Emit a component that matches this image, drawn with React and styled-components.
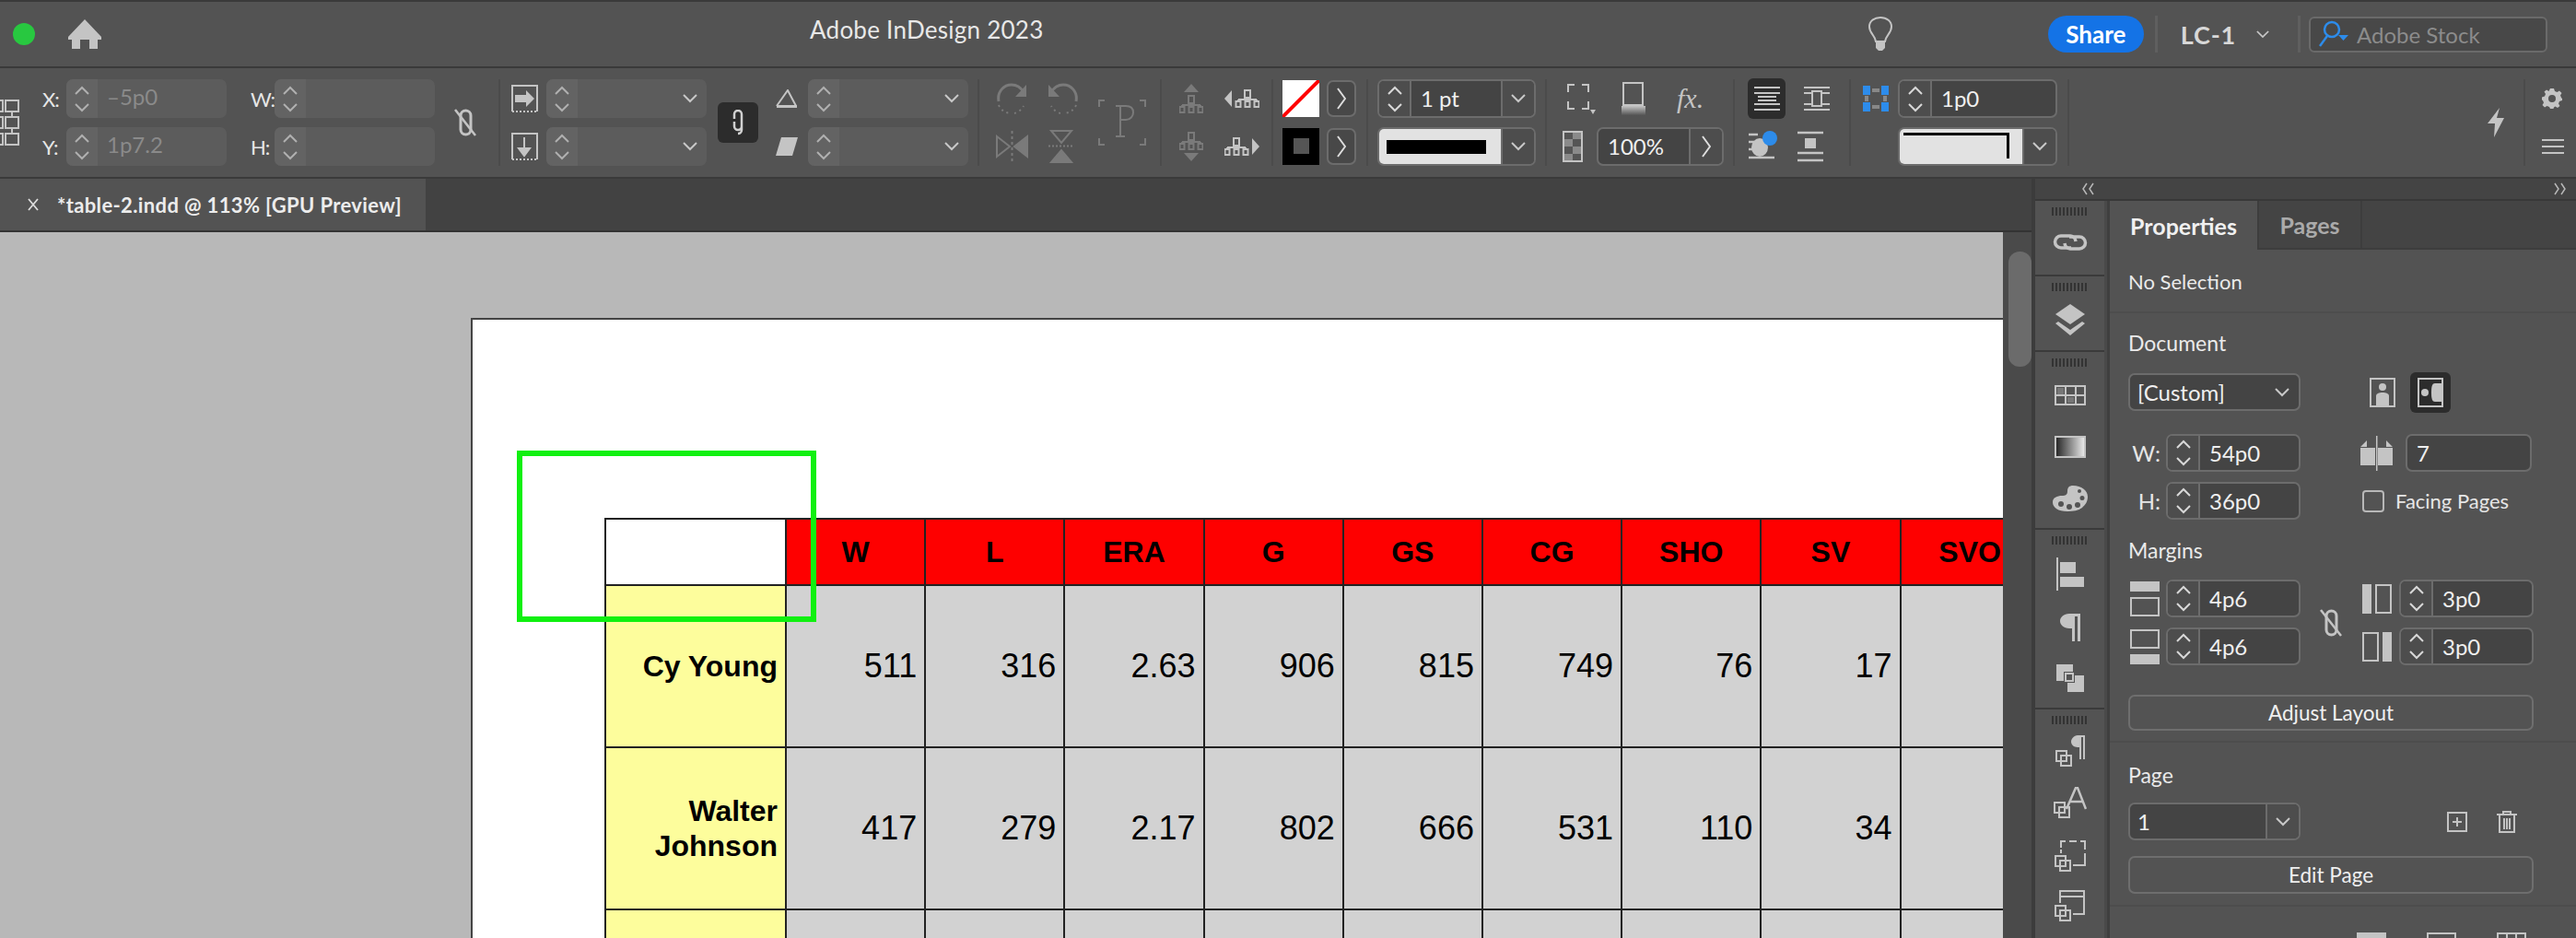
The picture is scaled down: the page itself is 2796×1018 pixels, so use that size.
import styled, { createGlobalStyle } from "styled-components";

const ICON = "#c4c4c4";
const DIM = "#7a7a7a";

const GlobalStyle = createGlobalStyle`
  html, body { margin: 0; padding: 0; background: #535353; }
  body { width: 2796px; height: 1018px; overflow: hidden; font-family: "Lato", "Noto Sans", sans-serif; }
  * { box-sizing: border-box; }
  svg { display: block; flex: none; }
`;

const Wrapper = styled.div`
  width: 2796px;
  height: 1018px;
  display: flex;
  flex-direction: column;
  border-top: 2px solid #3a3a3a;
  overflow: hidden;
`;

/* ---------- title bar ---------- */
const TitleBar = styled.header`
  height: 72px;
  flex: none;
  position: relative;
  display: flex;
  align-items: center;
  background: #535353;
  border-bottom: 2px solid #3a3a3a;
`;
const GreenDot = styled.span`
  width: 24px;
  height: 24px;
  margin-left: 14px;
  border-radius: 50%;
  background: #28c840;
`;
const HomeBtn = styled.span`
  margin-left: 36px;
`;
const AppTitle = styled.div`
  position: absolute;
  left: 879px;
  top: 14px;
  font-size: 26px;
  line-height: 32px;
  color: #e8e8e8;
  letter-spacing: 0.25px;
`;
const TitleRight = styled.div`
  margin-left: auto;
  display: flex;
  align-items: center;
  height: 100%;
  padding-right: 31px;
`;
const ShareBtn = styled.span`
  width: 104px;
  height: 40px;
  margin-left: 168px;
  border-radius: 20px;
  background: #1473e6;
  color: #fff;
  font-size: 26px;
  font-weight: 700;
  text-align: center;
  line-height: 40px;
`;
const TitleDivider = styled.span`
  width: 3px;
  height: 40px;
  margin: 0 ${(p) => p.$r}px 0 ${(p) => p.$l}px;
  background: #5f5f5f;
`;
const UserName = styled.span`
  font-size: 27px;
  font-weight: 700;
  letter-spacing: 0.8px;
  color: #d8d8d8;
  margin-right: 22px;
`;
const SearchBox = styled.div`
  width: 259px;
  height: 39px;
  display: flex;
  align-items: center;
  gap: 8px;
  padding-left: 8px;
  background: #484848;
  border: 2px solid #6a6a6a;
  border-radius: 6px;
  color: #8c8c8c;
  font-size: 24px;
`;

/* ---------- control bar ---------- */
const ControlBar = styled.div`
  height: 120px;
  flex: none;
  display: flex;
  align-items: center;
  background: #535353;
  border-bottom: 2px solid #3a3a3a;
`;
const Stack = styled.div`
  display: flex;
  flex-direction: column;
  justify-content: ${(p) => p.$justify || "flex-start"};
  gap: 10px;
  height: 94px;
  margin-left: ${(p) => p.$ml || 0}px;
`;
const Cell2 = styled.div`
  height: 42px;
  display: flex;
  align-items: center;
  justify-content: ${(p) => p.$justify || "flex-start"};
  gap: ${(p) => p.$gap || 0}px;
  padding-left: ${(p) => p.$pl || 0}px;
`;
const Slot = styled.div`
  margin-left: ${(p) => p.$ml || 0}px;
  display: flex;
  align-items: center;
`;
const VDivider = styled.span`
  width: 2px;
  height: 94px;
  margin-left: ${(p) => p.$ml || 0}px;
  background: #4b4b4b;
`;
const Label = styled.span`
  width: 26px;
  font-size: 22px;
  letter-spacing: -1px;
  white-space: nowrap;
  color: #e6e6e6;
`;
const DarkBtn = styled.span`
  width: ${(p) => p.$w}px;
  height: ${(p) => p.$h}px;
  display: flex;
  align-items: center;
  justify-content: center;
  background: #2c2c2c;
  border-radius: 6px;
`;
const Field = styled.div`
  width: ${(p) => p.$w}px;
  height: ${(p) => p.$h || 42}px;
  flex: none;
  display: flex;
  align-items: stretch;
  border-radius: 7px;
  overflow: hidden;
  background: ${(p) => (p.$off ? "#5c5c5c" : "#444444")};
  border: ${(p) => (p.$off ? "none" : "2px solid #6c6c6c")};
`;
const StepBox = styled.div`
  width: ${(p) => (p.$off ? 34 : 35)}px;
  flex: none;
  display: flex;
  flex-direction: column;
  align-items: center;
  justify-content: center;
  gap: 9px;
  background: ${(p) => (p.$off ? "#636363" : "#4d4d4d")};
  border-right: ${(p) => (p.$off ? "none" : "2px solid #6c6c6c")};
`;
const FieldText = styled.span`
  flex: 1;
  padding-left: 10px;
  font-size: 24px;
  line-height: 38px;
  color: ${(p) => (p.$off ? "#8a8a8a" : "#efefef")};
`;
const DropEnd = styled.span`
  width: ${(p) => p.$w || 36}px;
  flex: none;
  display: flex;
  align-items: center;
  justify-content: center;
  border-left: ${(p) => (p.$plain ? "none" : "2px solid #6c6c6c")};
  background: ${(p) => (p.$plain ? "transparent" : "#4d4d4d")};
`;
const StrokeSample = styled.span`
  flex: 1;
  display: flex;
  align-items: center;
  padding-left: 8px;
  background: #e2e2e2;
`;
const StrokeBar = styled.span`
  width: 108px;
  height: 15px;
  background: #000;
`;
const ArrowBtn = styled.span`
  width: 32px;
  height: 40px;
  display: flex;
  align-items: center;
  justify-content: center;
  margin-left: 8px;
  border: 2px solid #6c6c6c;
  border-radius: 7px;
  background: #484848;
`;

/* ---------- workspace ---------- */
const Workspace = styled.div`
  flex: 1;
  min-height: 0;
  display: flex;
`;
const DocColumn = styled.div`
  width: 2205px;
  flex: none;
  display: flex;
  flex-direction: column;
`;
const TabStrip = styled.div`
  height: 58px;
  flex: none;
  background: #424242;
  border-bottom: 2px solid #333;
`;
const DocTab = styled.div`
  width: 462px;
  height: 56px;
  display: flex;
  align-items: center;
  padding-left: 30px;
  gap: 20px;
  background: #535353;
  color: #ececec;
  font-size: 22px;
  font-weight: 700;
  letter-spacing: 0.36px;
  white-space: nowrap;
`;
const CanvasRow = styled.div`
  flex: 1;
  min-height: 0;
  display: flex;
`;
const Canvas = styled.div`
  width: 2174px;
  flex: none;
  padding: 93px 0 0 511px;
  background: #b8b8b8;
  overflow: hidden;
`;
const Page = styled.div`
  position: relative;
  height: 900px;
  padding: 215px 0 0 143px;
  background: #fff;
  border-top: 2px solid #444;
  border-left: 2px solid #444;
  overflow: hidden;
`;
const GreenFrame = styled.div`
  position: absolute;
  left: 48px;
  top: 142px;
  width: 325px;
  height: 186px;
  border: 6px solid #10f010;
`;
const Table = styled.table`
  width: 1557px;
  table-layout: fixed;
  border-collapse: collapse;
  font-family: "Liberation Sans", Arial, sans-serif;
  color: #000;
`;
const HeadCell = styled.th`
  height: 72px;
  padding: 0;
  border: 2px solid #222;
  background: ${(p) => (p.$blank ? "#fff" : "#fe0000")};
  font-size: 32px;
  font-weight: 700;
  text-align: center;
`;
const NameCell = styled.td`
  height: 176px;
  padding: 0 8px 0 0;
  border: 2px solid #222;
  background: #fdfd9c;
  font-size: 32px;
  line-height: 38px;
  font-weight: 700;
  text-align: right;
`;
const NumCell = styled.td`
  padding: 0 8px 0 0;
  border: 2px solid #222;
  background: #d2d2d2;
  font-size: 36px;
  text-align: right;
`;
const Rail = styled.div`
  flex: 1;
  background: #4a4a4a;
  padding-top: 21px;
  padding-left: 6px;
`;
const Thumb = styled.div`
  height: 125px;
  border-radius: 12px;
  background: #6b6b6b;
`;

/* ---------- right side ---------- */
const SideColumn = styled.div`
  flex: 1;
  display: flex;
  flex-direction: column;
  border-left: 4px solid #3c3c3c;
  background: #444;
`;
const CollapseStrip = styled.div`
  height: 24px;
  flex: none;
  display: flex;
  align-items: center;
  justify-content: space-between;
  padding: 0 10px 0 50px;
  background: #444;
  border-bottom: 2px solid #383838;
`;
const SideBody = styled.div`
  flex: 1;
  min-height: 0;
  display: flex;
`;
const Dock = styled.div`
  width: 81px;
  flex: none;
  background: #4a4a4a;
  border-right: 3px solid #3f3f3f;
  padding-right: 3px;
`;
const DockGroup = styled.div`
  height: ${(p) => p.$h}px;
  display: flex;
  flex-direction: column;
  align-items: center;
  padding-top: 7px;
  background: #535353;
  border-bottom: 2px solid #3a3a3a;
`;
const Grip = styled.span`
  width: 39px;
  height: 9px;
  flex: none;
  background: repeating-linear-gradient(90deg, #333 0 2px, transparent 2px 4px);
`;
const DockIcon = styled.span`
  margin-top: ${(p) => p.$mt}px;
`;
const Panel = styled.div`
  flex: 1;
  background: #535353;
  color: #ececec;
`;
const PanelTabs = styled.div`
  height: 53px;
  display: flex;
  background: #444;
  border-bottom: 2px solid #3d3d3d;
`;
const PanelTab = styled.div`
  width: ${(p) => p.$w}px;
  height: ${(p) => (p.$active ? 53 : 51)}px;
  display: flex;
  align-items: center;
  justify-content: center;
  font-size: 25px;
  font-weight: 700;
  color: ${(p) => (p.$active ? "#f0f0f0" : "#aaa")};
  background: ${(p) => (p.$active ? "#535353" : "#444")};
  border-right: 2px solid #3d3d3d;
`;
const Section = styled.section`
  height: ${(p) => p.$h}px;
  padding: ${(p) => p.$pt}px 46px 0 20px;
  border-bottom: 2px solid #4d4d4d;
`;
const SectionText = styled.div`
  font-size: ${(p) => p.$fs || 23}px;
  line-height: 26px;
  color: #eaeaea;
  margin-top: ${(p) => p.$mt || 0}px;
`;
const PanelRow = styled.div`
  height: ${(p) => p.$h || 41}px;
  margin-top: ${(p) => p.$mt || 0}px;
  display: flex;
  align-items: center;
`;
const LeftSlot = styled.div`
  width: 187px;
  flex: none;
  display: flex;
  align-items: center;
  justify-content: flex-end;
`;
const SideLabel = styled.span`
  font-size: 24px;
  color: #e6e6e6;
  margin-right: 6px;
`;
const SelectText = styled.span`
  flex: 1;
  padding-left: 8px;
  font-size: 24px;
  line-height: 37px;
  color: #efefef;
`;
const CheckBox = styled.span`
  width: 24px;
  height: 24px;
  margin-left: 67px;
  border: 2px solid #b8b8b8;
  border-radius: 4px;
`;
const CheckLabel = styled.span`
  margin-left: 12px;
  font-size: 22px;
  color: #e6e6e6;
`;
const WideButton = styled.div`
  width: 440px;
  height: ${(p) => p.$h}px;
  margin-top: ${(p) => p.$mt}px;
  display: flex;
  align-items: center;
  justify-content: center;
  border: 2px solid #6e6e6e;
  border-radius: 7px;
  font-size: 22.5px;
  color: #efefef;
`;
const MarginGrid = styled.div`
  display: grid;
  grid-template-columns: 187px 67px 186px;
  grid-template-rows: 41px 41px;
  row-gap: 11px;
  margin-top: 19px;
`;
const MarginCell = styled.div`
  grid-column: ${(p) => p.$col};
  display: flex;
  align-items: center;
  justify-content: space-between;
`;
const UnlinkCell = styled.div`
  grid-row: 1 / 3;
  grid-column: 2;
  display: flex;
  align-items: center;
  justify-content: center;
  padding-right: 2px;
`;
const BottomIcons = styled.div`
  display: flex;
  gap: 44px;
  padding: 28px 0 0 268px;
`;
const FxLabel = styled.span`
  margin-left: 6px;
  font-family: "Liberation Serif", serif;
  font-style: italic;
  font-size: 30px;
  color: ${ICON};
`;
const CornerSample = styled.span`
  flex: 1;
  padding: 4px 14px 6px 4px;
  background: #e2e2e2;
`;
const CornerLine = styled.span`
  display: block;
  height: 100%;
  border-top: 3px solid #000;
  border-right: 3px solid #000;
`;

/* ---------- drawings ---------- */
const Chev = ({ up, color = "#c8c8c8", w = 16, h = 10 }) => (
  <svg width={w} height={h} viewBox="0 0 16 10" fill="none" stroke={color} strokeWidth="2">
    <path d={up ? "M1 9 8 2l7 7" : "M1 1l7 7 7-7"} />
  </svg>
);
const Chev2 = ({ right }) => (
  <svg width="14" height="14" viewBox="0 0 14 14" fill="none" stroke="#b8b8b8" strokeWidth="1.500">
    <path d={right ? "M1 1l4 6-4 6M8 1l4 6-4 6" : "M6 1 2 7l4 6M13 1 9 7l4 6"} />
  </svg>
);
const Right = ({ color = "#ddd" }) => (
  <svg width="10" height="24" viewBox="0 0 10 24" fill="none" stroke={color} strokeWidth="2">
    <path d="M1 1l8 11-8 11" />
  </svg>
);
const CloseIcon = () => (
  <svg width="12" height="14" viewBox="0 0 12 14" fill="none" stroke="#ddd" strokeWidth="1.800">
    <path d="M1 1l10 12M11 1 1 13" />
  </svg>
);
const Stepper = ({ off }) => (
  <StepBox $off={off}>
    <Chev up color={off ? "#b0b0b0" : "#d8d8d8"} />
    <Chev color={off ? "#b0b0b0" : "#d8d8d8"} />
  </StepBox>
);
const HomeIcon = () => (
  <svg width="36" height="32" viewBox="0 0 36 32" fill={ICON}>
    <path d="M18 0l18 19v3l-4 0v10h-9V22H13v10H4V22l-4 0v-3z" />
  </svg>
);
const BulbIcon = () => (
  <svg width="28" height="38" viewBox="0 0 28 38" fill="none" stroke={ICON} strokeWidth="2">
    <path d="M9 27C8 20 2 18 2 11 2 5 7 1 14 1s12 4 12 10c0 7-6 9-7 16z" />
    <path d="M9 28h10v6l-3 3h-4l-3-3z" fill={ICON} stroke="none" />
  </svg>
);
const SearchIcon = () => (
  <svg width="34" height="30" viewBox="0 0 34 30" fill="none" stroke="#2d8ceb" strokeWidth="2.500">
    <circle cx="15" cy="10" r="8" />
    <path d="M10 17 2 28" />
    <path d="M22 16h11l-5.500 6z" fill="#2d8ceb" stroke="none" />
  </svg>
);
const RefPoint = () => (
  <svg width="21" height="50" viewBox="0 0 21 50" fill="none" stroke={ICON} strokeWidth="2">
    {[1, 19, 37].map((y) => (
      <g key={y}>
        <rect x="6" y={y} width="14" height="12" />
        <rect x="-10" y={y} width="13" height="12" />
        {y < 37 && <path d={`M13 ${y + 12}v6`} />}
      </g>
    ))}
  </svg>
);
const ChainOff = () => (
  <svg width="26" height="30" viewBox="0 0 26 30" fill="none" stroke={ICON} strokeWidth="3">
    <rect x="8" y="2" width="11" height="26" rx="5.500" />
    <path d="M2 1l22 28" strokeWidth="2.500" />
  </svg>
);
const ChainOn = () => (
  <svg width="16" height="28" viewBox="0 0 14 28" fill="none" stroke="#d0d0d0" strokeWidth="2.500">
    <path d="M3 10V5a4 4 0 018 0v13a4 4 0 01-8 0v-5M11 16v6a4 4 0 01-4 4" />
  </svg>
);
const OffsetIcon = ({ down }) => (
  <svg width="29" height="30" viewBox="0 0 29 30" fill="none" stroke={ICON} strokeWidth="2">
    <path d="M1 29V1h27v28" />
    <path d="M1 29h27" strokeDasharray="2 2" />
    {down ? <path d="M14 5v14M8 17h12l-6 8z" fill={ICON} /> : <path d="M4 11h12V6l9 9-9 9v-5H4z" fill={ICON} stroke="none" />}
  </svg>
);
const AngleIcon = () => (
  <svg width="24" height="20" viewBox="0 0 24 20" fill="none" stroke={ICON} strokeWidth="2">
    <path d="M1 18.500h22" strokeWidth="3" />
    <path d="M1 18 13 1l9 17" />
  </svg>
);
const ShearIcon = () => (
  <svg width="24" height="20" viewBox="0 0 24 20" fill={ICON}>
    <path d="M6 0h18l-6 20H0z" />
  </svg>
);
const RotateIcon = ({ flip }) => (
  <svg width="34" height="34" viewBox="0 0 34 34" fill="none" stroke={DIM} strokeWidth="3" style={flip ? { transform: "scaleX(-1)" } : undefined}>
    <path d="M3 20C1 9 9 2 17 2c6 0 10 3 13 8" />
    <path d="M3 24c2 5 6 8 12 9M20 33c4-1 8-4 10-8" strokeDasharray="2 4" strokeWidth="2" />
    <path d="M33 2v13H21z" fill={DIM} stroke="none" />
  </svg>
);
const FlipH = () => (
  <svg width="35" height="34" viewBox="0 0 35 34" fill="none" stroke={DIM} strokeWidth="2">
    <path d="M1 6l14 11L1 28z" />
    <path d="M34 6 20 17l14 11z" fill={DIM} />
    <path d="M17.500 0v34" strokeDasharray="3 3" />
  </svg>
);
const FlipV = () => (
  <svg width="28" height="36" viewBox="0 0 28 36" fill="none" stroke={DIM} strokeWidth="2">
    <path d="M3 1h22L14 14z" />
    <path d="M3 35h22L14 22z" fill={DIM} />
    <path d="M0 17.500h28" strokeDasharray="2 2" />
  </svg>
);
const PFrame = () => (
  <svg width="52" height="50" viewBox="0 0 52 50" fill="none" stroke={DIM} strokeWidth="2">
    <path d="M1 8V1h6M45 1h6v7M1 42v7h6M45 49h6v-7" />
    <path d="M19 7h11c6 0 8 3 8 7s-3 8-8 8h-6M24 7v33M19 40h10" />
  </svg>
);
const OrgBody = ({ x, y, c }) => (
  <g transform={`translate(${x} ${y})`} fill="none" stroke={c} strokeWidth="2">
    <rect x="10" y="1" width="6" height="8" />
    <path d="M13 9v2M3 11h20M3 11v2M13 11v2M23 11v2" />
    <rect x="0.500" y="13" width="5" height="6" />
    <rect x="10.500" y="13" width="5" height="6" />
    <rect x="20.500" y="13" width="5" height="6" />
  </g>
);
const OrgV = ({ down }) => (
  <svg width="26" height="32" viewBox="0 0 26 32" fill={DIM}>
    <OrgBody x={0} y={down ? 0 : 12} c={DIM} />
    {down ? <path d="M5 23h16l-8 9z" /> : <path d="M5 9h16L13 0z" />}
  </svg>
);
const OrgH = ({ right }) => (
  <svg width="38" height="20" viewBox="0 0 38 20" fill={ICON}>
    <OrgBody x={right ? 0 : 12} y={0} c={ICON} />
    {right ? <path d="M30 1v18l8-9z" /> : <path d="M8 1v18l-8-9z" />}
  </svg>
);
const NoneSwatch = () => (
  <svg width="40" height="40" viewBox="0 0 40 40">
    <rect width="40" height="40" fill="#fff" />
    <path d="M0 40 40 0" stroke="#f00" strokeWidth="4" />
  </svg>
);
const StrokeSwatch = () => (
  <svg width="40" height="40" viewBox="0 0 40 40">
    <rect width="40" height="40" fill="#000" />
    <rect x="12" y="11" width="17" height="17" fill="#555" />
  </svg>
);
const FrameFx = () => (
  <svg width="32" height="34" viewBox="0 0 32 34" fill="none" stroke={ICON} strokeWidth="2">
    <rect x="2" y="2" width="22" height="26" />
    <path d="M9 2h8M9 28h8M2 10v10M24 10v10" stroke="#535353" strokeWidth="3" />
    <path d="M26 29h6l-3 5z" fill={ICON} stroke="none" />
  </svg>
);
const ShadowIcon = () => (
  <svg width="26" height="36" viewBox="0 0 26 36">
    <defs>
      <linearGradient id="sh" x1="0" y1="0" x2="0" y2="1">
        <stop offset="0" stopColor="#c4c4c4" />
        <stop offset="1" stopColor="#555" />
      </linearGradient>
    </defs>
    <rect x="2" y="1" width="21" height="24" fill="none" stroke={ICON} strokeWidth="2" />
    <rect x="0" y="26" width="26" height="10" fill="url(#sh)" />
  </svg>
);
const Checker = () => (
  <svg width="22" height="34" viewBox="0 0 22 34">
    <rect x="1" y="1" width="20" height="32" fill="#8a8a8a" stroke={ICON} strokeWidth="2" />
    <path d="M2 2h9v7H2zM11 9h9v8h-9zM2 17h9v8H2zM11 25h9v7h-9z" fill="#555" />
  </svg>
);
const WrapIcon = ({ kind }) => (
  <svg width="30" height="28" viewBox="0 0 30 28" fill="none" stroke={ICON} strokeWidth="2">
    <path d="M1 2h28M1 26h28M1 8h28M1 20h28" />
    {kind === "a" ? <path d="M5 11h20v2H5zM5 15h20v2H5z" fill={ICON} stroke="none" /> : <rect x="10" y="6" width="10" height="16" fill="#535353" />}
  </svg>
);
const WrapObj = () => (
  <svg width="34" height="34" viewBox="0 0 34 34" fill="none">
    <path d="M1 4h10M1 12h6M1 20h6M1 29h28M20 12h9" stroke={ICON} strokeWidth="2.500" />
    <ellipse cx="13" cy="18" rx="9" ry="10" fill={ICON} />
    <circle cx="24" cy="8" r="8" fill="#2d8ceb" />
  </svg>
);
const WrapJump = () => (
  <svg width="30" height="34" viewBox="0 0 30 34" fill="none" stroke={ICON} strokeWidth="2.500">
    <path d="M1 2h28M1 24h28M1 32h28" />
    <rect x="9" y="8" width="12" height="11" fill={ICON} stroke="none" />
  </svg>
);
const GapIcon = () => (
  <svg width="28" height="28" viewBox="0 0 28 28" fill="#2d8ceb">
    <path d="M0 0h8v10H0zM20 0h8v10h-8zM0 18h8v10H0zM20 18h8v10h-8z" />
    <path d="M10 3h8v4h-8zM10 21h8v4h-8zM2 11h4v6H2zM22 11h4v6h-4z" fill="#888" />
  </svg>
);
const BoltIcon = () => (
  <svg width="20" height="32" viewBox="0 0 20 32" fill={ICON}>
    <path d="M14 0 1 17l8 0-1 15 11-21-8 0z" />
  </svg>
);
const GearIcon = () => (
  <svg width="22" height="22" viewBox="0 0 22 22" fill={ICON}>
    <path fillRule="evenodd" d="M9 0h4l1 3 2.500 1L19 2.500 21.500 5l-1.500 2.500 1 2.500 1 1v2l-3 1-1 2.500 1.500 2.500L17 21l-2.500-1.500-1.500 1-.5 1.500H9l-1-2-2.500-1L3 20.500.5 18 2 15.500 1 13l-1-.5v-3L3 8.500 4 6 2.500 3.500 5 1.500 7.500 3zM11 7a4 4 0 100 8 4 4 0 000-8z" />
  </svg>
);
const MenuIcon = () => (
  <svg width="24" height="16" viewBox="0 0 24 16" stroke={ICON} strokeWidth="2">
    <path d="M0 1h24M0 8h24M0 15h24" />
  </svg>
);
const LinkIcon = () => (
  <svg width="38" height="18" viewBox="0 0 38 18" fill="none" stroke={ICON} strokeWidth="3.500">
    <path d="M20 15h-11a6.500 6.500 0 010-13h10a6.500 6.500 0 016 6" />
    <path d="M18 3h11a6.500 6.500 0 010 13H19a6.500 6.500 0 01-6-6" />
  </svg>
);
const LayersIcon = () => (
  <svg width="32" height="34" viewBox="0 0 32 34" fill={ICON}>
    <path d="M16 0l16 11-16 11L0 11z" />
    <path d="M3 19l13 9 13-9 3 2-16 13L0 21z" />
  </svg>
);
const TableIcon = () => (
  <svg width="34" height="22" viewBox="0 0 34 22" fill="#777" stroke={ICON} strokeWidth="2">
    <rect x="1" y="1" width="32" height="20" fill="none" />
    <path d="M1 11h32M12 1v20M23 1v20" fill="none" />
    <rect x="3" y="3" width="7" height="7" stroke="none" />
    <rect x="14" y="13" width="7" height="6" stroke="none" />
  </svg>
);
const GradientIcon = () => (
  <svg width="34" height="24" viewBox="0 0 34 24">
    <defs>
      <linearGradient id="gr">
        <stop offset="0" stopColor="#222" />
        <stop offset="1" stopColor="#eee" />
      </linearGradient>
    </defs>
    <rect x="1" y="1" width="32" height="22" fill="url(#gr)" stroke={ICON} strokeWidth="2" />
  </svg>
);
const PaletteIcon = () => (
  <svg width="38" height="28" viewBox="0 0 38 28" fill={ICON}>
    <path fillRule="evenodd" d="M22 0c9 0 16 5 16 12 0 6-3 9-6 12-4 3-10 4-16 4C6 28 0 24 0 18c0-5 5-7 10-7 4 0 6-1 6-5 0-4 2-6 6-6zM29 4a2 2 0 100 4 2 2 0 000-4zM32 11a2.500 2.500 0 100 5 2.500 2.500 0 000-5zM27 18a3 3 0 100 6 3 3 0 000-6zM18 20a3 3 0 100 6 3 3 0 000-6zM9 17a3 3 0 100 6 3 3 0 000-6z" />
  </svg>
);
const AlignIcon = () => (
  <svg width="30" height="36" viewBox="0 0 30 36" fill={ICON}>
    <rect x="0" y="0" width="2" height="36" />
    <rect x="4" y="5" width="17" height="12" />
    <rect x="4" y="21" width="26" height="11" />
  </svg>
);
const Pilcrow = () => (
  <svg width="22" height="30" viewBox="0 0 22 30" fill={ICON}>
    <path d="M10 0h12v30h-3V3h-3v27h-3V16h-3C4 16 0 12 0 8s4-8 10-8z" />
  </svg>
);
const PathfinderIcon = () => (
  <svg width="30" height="30" viewBox="0 0 30 30" fill={ICON}>
    <path d="M0 0h18v8H8v10H0z" />
    <path d="M12 12h18v18H12zM12 12v8h8v-8z" />
    <rect x="10" y="10" width="8" height="8" fill="none" stroke={ICON} strokeWidth="2" />
  </svg>
);
const MiniBoxes = ({ x = 0, y = 0 }) => (
  <g transform={`translate(${x} ${y})`} fill="none" stroke={ICON} strokeWidth="2">
    <rect x="1" y="1" width="11" height="11" />
    <rect x="6" y="6" width="11" height="11" />
  </g>
);
const ParaStyle = () => (
  <svg width="32" height="34" viewBox="0 0 32 34">
    <MiniBoxes y="16" />
    <path d="M20 0h12v26h-2V2h-2v24h-2V13h-2c-4 0-7-3-7-6s3-7 7-7z" fill={ICON} />
  </svg>
);
const CharStyle = () => (
  <svg width="36" height="34" viewBox="0 0 36 34">
    <MiniBoxes y="16" />
    <path d="M14 24 24 1h2l9 23M18 16h14" fill="none" stroke={ICON} strokeWidth="2.500" />
  </svg>
);
const ObjStyle = () => (
  <svg width="34" height="34" viewBox="0 0 34 34">
    <MiniBoxes y="16" />
    <path d="M7 14V1h26v26H20" fill="none" stroke={ICON} strokeWidth="2" />
    <path d="M12 1h4M24 1h4M33 10v4M7 8v2" stroke="#535353" strokeWidth="2" />
  </svg>
);
const TableStyle = () => (
  <svg width="34" height="34" viewBox="0 0 34 34">
    <MiniBoxes y="16" />
    <path d="M6 14V1h26v25H20M6 7h26" fill="none" stroke={ICON} strokeWidth="2" />
  </svg>
);
const PortraitIcon = () => (
  <svg width="28" height="32" viewBox="0 0 28 32">
    <rect x="1" y="1" width="26" height="30" fill="none" stroke={ICON} strokeWidth="2" />
    <circle cx="14" cy="10" r="4" fill={ICON} />
    <path d="M7 30V20c0-3 3-4 7-4s7 1 7 4v10z" fill={ICON} />
  </svg>
);
const LandscapeIcon = () => (
  <svg width="28" height="32" viewBox="0 0 28 32">
    <rect x="1" y="1" width="26" height="30" fill="none" stroke={ICON} strokeWidth="2" />
    <circle cx="8" cy="16" r="4" fill={ICON} />
    <path d="M27 6H19c-3 0-4 3-4 10s1 10 4 10h8z" fill={ICON} />
  </svg>
);
const ColumnsIcon = () => (
  <svg width="35" height="38" viewBox="0 0 35 38" fill={ICON}>
    <path d="M0 12l7-7v7zM0 13h16v19H0zM19 13h16v19H19zM28 5l7 7h-7z" />
    <rect x="17" y="0" width="1.500" height="38" />
  </svg>
);
const MarginTB = ({ bottom }) => (
  <svg width="32" height="38" viewBox="0 0 32 38" style={bottom ? { transform: "scaleY(-1)" } : undefined}>
    <rect x="0" y="0" width="32" height="11" fill={ICON} />
    <rect x="1" y="18" width="30" height="19" fill="none" stroke={ICON} strokeWidth="2" />
  </svg>
);
const MarginLR = ({ right }) => (
  <svg width="32" height="32" viewBox="0 0 32 32" style={right ? { transform: "scaleX(-1)" } : undefined}>
    <rect x="0" y="0" width="10" height="32" fill={ICON} />
    <rect x="15" y="1" width="16" height="30" fill="none" stroke={ICON} strokeWidth="2" />
  </svg>
);
const AddPage = () => (
  <svg width="22" height="22" viewBox="0 0 22 22" fill="none" stroke={ICON} strokeWidth="2">
    <rect x="1" y="1" width="20" height="20" />
    <path d="M11 6v10M6 11h10" />
  </svg>
);
const Trash = () => (
  <svg width="22" height="24" viewBox="0 0 22 24" fill="none" stroke={ICON} strokeWidth="2">
    <path d="M0 4h22M7 4V1h8v3M3 4v19h16V4M8 8v12M11 8v12M14 8v12" />
  </svg>
);
const ColIcons = ({ kind }) => (
  <svg width="32" height="8" viewBox="0 0 32 8">
    {kind === 0 && <rect width="32" height="8" fill={ICON} />}
    {kind === 1 && <rect x="1" y="1" width="30" height="10" fill="none" stroke={ICON} strokeWidth="2" />}
    {kind === 2 && <path d="M1 8V1h30v7M11 1v7M21 1v7" fill="none" stroke={ICON} strokeWidth="2" />}
  </svg>
);

/* ---------- data ---------- */
const COLS = ["W", "L", "ERA", "G", "GS", "CG", "SHO", "SV", "SVO"];
const ROWS = [
  { name: "Cy Young", vals: ["511", "316", "2.63", "906", "815", "749", "76", "17", ""] },
  { name: <>Walter<br />Johnson</>, vals: ["417", "279", "2.17", "802", "666", "531", "110", "34", ""] },
  { name: "", vals: ["", "", "", "", "", "", "", "", ""] },
];

const Labelled = ({ label, value }) => (
  <Cell2>
    <Label>{label}</Label>
    <Field $w={174} $off>
      <Stepper off />
      <FieldText $off>{value}</FieldText>
    </Field>
  </Cell2>
);
const ComboOff = () => (
  <Field $w={174} $off>
    <Stepper off />
    <FieldText $off />
    <DropEnd $plain><Chev color="#c8c8c8" /></DropEnd>
  </Field>
);
const SideField = ({ value }) => (
  <Field $w={146} $h={41}>
    <Stepper />
    <FieldText>{value}</FieldText>
  </Field>
);

const App = () => {
  return (
    <Wrapper>
      <GlobalStyle />
      <TitleBar>
        <GreenDot />
        <HomeBtn><HomeIcon /></HomeBtn>
        <AppTitle>Adobe InDesign 2023</AppTitle>
        <TitleRight>
          <BulbIcon />
          <ShareBtn>Share</ShareBtn>
          <TitleDivider $l={12} $r={25} />
          <UserName>LC-1</UserName>
          <Chev color="#c8c8c8" w={14} h={9} />
          <TitleDivider $l={31} $r={9} />
          <SearchBox><SearchIcon />Adobe Stock</SearchBox>
        </TitleRight>
      </TitleBar>

      <ControlBar>
        <RefPoint />
        <Stack $ml={25}>
          <Labelled label="X:" value="–5p0" />
          <Labelled label="Y:" value="1p7.2" />
        </Stack>
        <Stack $ml={26}>
          <Labelled label="W:" />
          <Labelled label="H:" />
        </Stack>
        <Slot $ml={20}><ChainOff /></Slot>
        <VDivider $ml={23} />
        <Stack $ml={12}>
          <Cell2><OffsetIcon /></Cell2>
          <Cell2><OffsetIcon down /></Cell2>
        </Stack>
        <Stack $ml={9}>
          <ComboOff />
          <ComboOff />
        </Stack>
        <Slot $ml={12}><DarkBtn $w={44} $h={44}><ChainOn /></DarkBtn></Slot>
        <Stack $ml={19}>
          <Cell2><AngleIcon /></Cell2>
          <Cell2><ShearIcon /></Cell2>
        </Stack>
        <Stack $ml={11}>
          <ComboOff />
          <ComboOff />
        </Stack>
        <VDivider $ml={10} />
        <Stack $ml={18}>
          <Cell2 $gap={22}><RotateIcon /><RotateIcon flip /></Cell2>
          <Cell2 $gap={22}><FlipH /><FlipV /></Cell2>
        </Stack>
        <Slot $ml={21}><PFrame /></Slot>
        <VDivider $ml={15} />
        <Stack $ml={19}>
          <Cell2 $gap={23}><OrgV /><OrgH /></Cell2>
          <Cell2 $gap={23}><OrgV down /><OrgH right /></Cell2>
        </Stack>
        <VDivider $ml={13} />
        <Stack $ml={10}>
          <Cell2><NoneSwatch /><ArrowBtn><Right /></ArrowBtn></Cell2>
          <Cell2><StrokeSwatch /><ArrowBtn><Right /></ArrowBtn></Cell2>
        </Stack>
        <VDivider $ml={11} />
        <Stack $ml={10}>
          <Field $w={172}>
            <Stepper />
            <FieldText>1 pt</FieldText>
            <DropEnd><Chev /></DropEnd>
          </Field>
          <Field $w={172}>
            <StrokeSample><StrokeBar /></StrokeSample>
            <DropEnd><Chev /></DropEnd>
          </Field>
        </Stack>
        <VDivider $ml={10} />
        <Stack $ml={17}>
          <Cell2 $gap={28} $pl={4}>
            <FrameFx />
            <ShadowIcon />
            <FxLabel>fx.</FxLabel>
          </Cell2>
          <Cell2 $gap={15}>
            <Checker />
            <Field $w={138}>
              <FieldText>100%</FieldText>
              <DropEnd><Right /></DropEnd>
            </Field>
          </Cell2>
        </Stack>
        <VDivider $ml={10} />
        <Stack $ml={14}>
          <Cell2 $gap={19}>
            <DarkBtn $w={41} $h={44}><WrapIcon kind="a" /></DarkBtn>
            <WrapIcon kind="b" />
          </Cell2>
          <Cell2 $gap={19}>
            <WrapObj />
            <WrapJump />
          </Cell2>
        </Stack>
        <VDivider $ml={20} />
        <Stack $ml={13}>
          <Cell2 $gap={10}>
            <GapIcon />
            <Field $w={173}>
              <Stepper />
              <FieldText>1p0</FieldText>
            </Field>
          </Cell2>
          <Cell2 $justify="flex-end">
            <Field $w={173}>
              <CornerSample><CornerLine /></CornerSample>
              <DropEnd><Chev /></DropEnd>
            </Field>
          </Cell2>
        </Stack>
        <VDivider $ml={11} />
        <Slot $ml={453}><BoltIcon /></Slot>
        <VDivider $ml={20} />
        <Stack $ml={18} $justify="center">
          <Cell2><GearIcon /></Cell2>
          <Cell2><MenuIcon /></Cell2>
        </Stack>
      </ControlBar>

      <Workspace>
        <DocColumn>
          <TabStrip>
            <DocTab>
              <CloseIcon />
              *table-2.indd @ 113% [GPU Preview]
            </DocTab>
          </TabStrip>
          <CanvasRow>
            <Canvas>
              <Page>
                <Table>
                  <colgroup>
                    <col style={{ width: 196 }} />
                    {COLS.map((c) => <col key={c} style={{ width: 151.2 }} />)}
                  </colgroup>
                  <thead>
                    <tr>
                      <HeadCell $blank />
                      {COLS.map((c) => <HeadCell key={c}>{c}</HeadCell>)}
                    </tr>
                  </thead>
                  <tbody>
                    {ROWS.map((r, i) => (
                      <tr key={i}>
                        <NameCell>{r.name}</NameCell>
                        {r.vals.map((v, j) => <NumCell key={j}>{v}</NumCell>)}
                      </tr>
                    ))}
                  </tbody>
                </Table>
                <GreenFrame />
              </Page>
            </Canvas>
            <Rail><Thumb /></Rail>
          </CanvasRow>
        </DocColumn>

        <SideColumn>
          <CollapseStrip>
            <Chev2 /><Chev2 right />
          </CollapseStrip>
          <SideBody>
            <Dock>
              <DockGroup $h={82}><Grip /><DockIcon $mt={20}><LinkIcon /></DockIcon></DockGroup>
              <DockGroup $h={82}><Grip /><DockIcon $mt={14}><LayersIcon /></DockIcon></DockGroup>
              <DockGroup $h={193}>
                <Grip />
                <DockIcon $mt={20}><TableIcon /></DockIcon>
                <DockIcon $mt={33}><GradientIcon /></DockIcon>
                <DockIcon $mt={30}><PaletteIcon /></DockIcon>
              </DockGroup>
              <DockGroup $h={195}>
                <Grip />
                <DockIcon $mt={14}><AlignIcon /></DockIcon>
                <DockIcon $mt={25}><Pilcrow /></DockIcon>
                <DockIcon $mt={25}><PathfinderIcon /></DockIcon>
              </DockGroup>
              <DockGroup $h={250}>
                <Grip />
                <DockIcon $mt={12}><ParaStyle /></DockIcon>
                <DockIcon $mt={22}><CharStyle /></DockIcon>
                <DockIcon $mt={24}><ObjStyle /></DockIcon>
                <DockIcon $mt={20}><TableStyle /></DockIcon>
              </DockGroup>
            </Dock>
            <Panel>
              <PanelTabs>
                <PanelTab $w={162} $active>Properties</PanelTab>
                <PanelTab $w={112}>Pages</PanelTab>
              </PanelTabs>
              <Section $h={69} $pt={22}>
                <SectionText $fs={22}>No Selection</SectionText>
              </Section>
              <Section $h={466} $pt={19}>
                <SectionText>Document</SectionText>
                <PanelRow $mt={20}>
                  <Field $w={187} $h={41}>
                    <SelectText>[Custom]</SelectText>
                    <DropEnd $plain><Chev /></DropEnd>
                  </Field>
                  <Slot $ml={75}><PortraitIcon /></Slot>
                  <Slot $ml={16}><DarkBtn $w={44} $h={44}><LandscapeIcon /></DarkBtn></Slot>
                </PanelRow>
                <PanelRow $mt={25}>
                  <LeftSlot><SideLabel>W:</SideLabel><SideField value="54p0" /></LeftSlot>
                  <Slot $ml={65}><ColumnsIcon /></Slot>
                  <Slot $ml={14}>
                    <Field $w={137} $h={41}><FieldText>7</FieldText></Field>
                  </Slot>
                </PanelRow>
                <PanelRow $mt={11}>
                  <LeftSlot><SideLabel>H:</SideLabel><SideField value="36p0" /></LeftSlot>
                  <CheckBox />
                  <CheckLabel>Facing Pages</CheckLabel>
                </PanelRow>
                <SectionText $mt={20}>Margins</SectionText>
                <MarginGrid>
                  <MarginCell $col={1}><Slot $ml={2}><MarginTB /></Slot><SideField value="4p6" /></MarginCell>
                  <UnlinkCell><ChainOff /></UnlinkCell>
                  <MarginCell $col={3}><MarginLR /><SideField value="3p0" /></MarginCell>
                  <MarginCell $col={1}><Slot $ml={2}><MarginTB bottom /></Slot><SideField value="4p6" /></MarginCell>
                  <MarginCell $col={3}><MarginLR right /><SideField value="3p0" /></MarginCell>
                </MarginGrid>
                <WideButton $h={39} $mt={32}>Adjust Layout</WideButton>
              </Section>
              <Section $h={178} $pt={22}>
                <SectionText>Page</SectionText>
                <PanelRow $mt={17}>
                  <Field $w={187} $h={41}>
                    <SelectText>1</SelectText>
                    <DropEnd $w={36}><Chev /></DropEnd>
                  </Field>
                  <Slot $ml={159}><AddPage /></Slot>
                  <Slot $ml={32}><Trash /></Slot>
                </PanelRow>
                <WideButton $h={41} $mt={17}>Edit Page</WideButton>
              </Section>
              <BottomIcons>
                <ColIcons kind={0} />
                <ColIcons kind={1} />
                <ColIcons kind={2} />
              </BottomIcons>
            </Panel>
          </SideBody>
        </SideColumn>
      </Workspace>
    </Wrapper>
  );
};

export default App;
